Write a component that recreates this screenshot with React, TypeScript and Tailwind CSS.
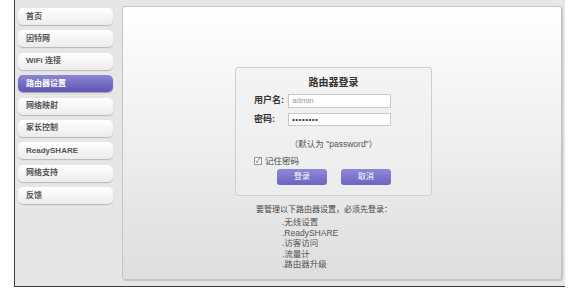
import React from "react";

const items = ["首页", "因特网", "WiFi 连接", "路由器设置", "网络映射", "家长控制", "ReadySHARE", "网络支持", "反馈"];

export default function App() {
  const font = { fontFamily: '"Liberation Sans", "Noto Sans CJK SC", sans-serif' };
  return (
    <div className="w-[571px] h-[289px] bg-white relative overflow-hidden" style={font}>
      <div className="ml-[14px] w-[551px] h-[287px] border-l border-b border-[#3a3a3a] bg-[#e6e6e6] flex">
        <div className="w-[107px] pt-[8px] pl-[3px] flex flex-col gap-[5.4px]">
          {items.map((t, i) =>
            i === 3 ? (
              <div key={t} className="h-[17px] w-[95px] rounded-[5px] bg-gradient-to-b from-[#8d86d6] to-[#5e56b4] shadow-[0_1px_1px_rgba(0,0,0,0.3)] flex items-center pl-[8px] text-[8px] font-bold text-white">
                {t}
              </div>
            ) : (
              <div key={t} className="h-[17px] w-[95px] rounded-[5px] bg-gradient-to-b from-[#ffffff] to-[#ececec] shadow-[0_1px_1px_rgba(0,0,0,0.2)] flex items-center pl-[8px] text-[8px] font-bold text-[#555]">
                {t}
              </div>
            )
          )}
        </div>
        <div className="mt-[6px] h-[274px] w-[440px] rounded-[3px] border border-[#c4c4c4] bg-gradient-to-b from-[#ffffff] to-[#dedede] shadow-[1px_1px_1px_rgba(0,0,0,0.15)] flex flex-col items-start">
          <div className="ml-[112px] mt-[60px] w-[197px] h-[129px] rounded-[3px] border border-[#cfcfcf] bg-gradient-to-b from-[#f4f4f4] to-[#ececec] flex flex-col">
            <div className="text-center text-[10px] font-bold text-[#333] mt-[9px] h-[12px] leading-[12px]">路由器登录</div>
            <div className="flex items-center mt-[5px] ml-[18px]">
              <span className="w-[34px] text-[9px] font-bold text-[#333]">用户名:</span>
              <div className="w-[103px] h-[14px] border border-[#c8c8c8] bg-white text-[8px] text-[#999] pl-[3px] leading-[12px]">admin</div>
            </div>
            <div className="flex items-center mt-[5px] ml-[18px]">
              <span className="w-[34px] text-[9px] font-bold text-[#333]">密码:</span>
              <div className="w-[103px] h-[13px] border border-[#c8c8c8] bg-white text-[8px] text-[#333] pl-[3px] leading-[11px] tracking-[0.5px]">••••••••</div>
            </div>
            <div className="text-center text-[8.5px] text-[#555] mt-[12px] leading-[10px]">（默认为 "password"）</div>
            <div className="flex items-center ml-[18px] mt-[7px] gap-[3px]">
              <div className="w-[8px] h-[8px] border border-[#999] bg-white text-[7px] leading-[6px] text-[#446] flex items-center justify-center">✓</div>
              <span className="text-[8.5px] text-[#444] leading-[10px]">记住密码</span>
            </div>
            <div className="flex ml-[41px] mt-[3px] gap-[14px]">
              <div className="w-[50px] h-[16px] rounded-[3px] bg-gradient-to-b from-[#8f88d8] to-[#6c64c0] text-white text-[8px] flex items-center justify-center">登录</div>
              <div className="w-[50px] h-[16px] rounded-[3px] bg-gradient-to-b from-[#8f88d8] to-[#6c64c0] text-white text-[8px] flex items-center justify-center">取消</div>
            </div>
          </div>
          <div className="ml-[133px] mt-[9px] text-[8px] text-[#444] leading-[10px]">要管理以下路由器设置，必须先登录：</div>
          <div className="ml-[159px] mt-[2px] flex flex-col text-[8.5px] text-[#555] leading-[10.5px]">
            <span>.无线设置</span>
            <span>.ReadySHARE</span>
            <span>.访客访问</span>
            <span>.流量计</span>
            <span>.路由器升级</span>
          </div>
        </div>
      </div>
    </div>
  );
}
